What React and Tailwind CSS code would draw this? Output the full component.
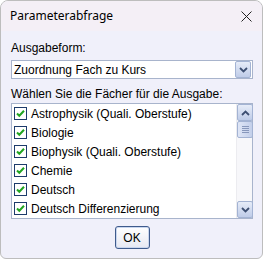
const faecher = [
  "Astrophysik (Quali. Oberstufe)",
  "Biologie",
  "Biophysik (Quali. Oberstufe)",
  "Chemie",
  "Deutsch",
  "Deutsch Differenzierung",
];

function Chevron({ up }) {
  return (
    <svg width="9" height="6" viewBox="0 0 9 6" className={up ? "rotate-180" : ""}>
      <path d="M1 1 L4.5 4.5 L8 1" fill="none" stroke="#3d4f72" strokeWidth="1.8" />
    </svg>
  );
}

function ScrollButton({ up }) {
  return (
    <div className="w-[16px] h-[17px] flex items-center justify-center border border-[#a3b3d3] rounded-[2px] bg-gradient-to-b from-[#e6ecf8] to-[#bfcce8]">
      <Chevron up={up} />
    </div>
  );
}

function CheckBox() {
  return (
    <div className="w-[13px] h-[13px] border border-[#1d3b6b] bg-white flex items-center justify-center shrink-0">
      <svg width="11" height="11" viewBox="0 0 11 11">
        <path d="M2 5.5 L4.3 7.8 L9 2.8" fill="none" stroke="#21a521" strokeWidth="2" />
      </svg>
    </div>
  );
}

export default function App() {
  return (
    <div className="w-[264px] h-[262px] bg-white font-['Liberation_Sans',sans-serif] text-[12px] text-black">
      <div className="w-[263px] h-[259px] border border-[#bdbdbd] rounded-t-lg rounded-b-md overflow-hidden flex flex-col bg-[#f0f0fa]">
        <div className="h-[30px] shrink-0 bg-[#f4eff6] flex items-center justify-between pl-[9px] pr-[10px]">
          <span className="text-[12px] font-['Noto_Sans',sans-serif] leading-none">Parameterabfrage</span>
          <svg width="11" height="11" viewBox="0 0 11 11">
            <path d="M0.5 0.5 L10.5 10.5 M10.5 0.5 L0.5 10.5" stroke="#222" strokeWidth="1" />
          </svg>
        </div>
        <div className="flex flex-col pl-[10px] pr-[9px] pt-[10px]">
          <div className="leading-[14px]">Ausgabeform:</div>
          <div className="mt-[5px] h-[19px] border border-[#a8b4cc] bg-white flex items-center justify-between pl-[2px] pr-[1px]">
            <span className="leading-none">Zuordnung Fach zu Kurs</span>
            <div className="w-[16px] h-[17px] flex items-center justify-center border border-[#a3b3d3] rounded-[2px] bg-gradient-to-b from-[#e6ecf8] to-[#bfcce8]">
              <Chevron />
            </div>
          </div>
          <div className="mt-[8px] leading-[14px]">Wählen Sie die Fächer für die Ausgabe:</div>
          <div className="mt-[2px] h-[116px] border border-[#a8b4cc] bg-white flex">
            <div className="flex-1 flex flex-col">
              {faecher.map((f) => (
                <div key={f} className="h-[19px] flex items-center gap-[4px] pl-[2px]">
                  <CheckBox />
                  <span className="leading-none">{f}</span>
                </div>
              ))}
            </div>
            <div className="w-[16px] flex flex-col bg-[#f7f7fa] border-l border-[#ececf0]">
              <ScrollButton up />
              <div className="w-[16px] h-[17px] border border-[#a3b3d3] rounded-[2px] bg-gradient-to-r from-[#dfe6f6] to-[#c3cfea] flex flex-col items-center justify-center gap-[1px]">
                <div className="w-[7px] h-px bg-[#8797bb]" />
                <div className="w-[7px] h-px bg-[#8797bb]" />
                <div className="w-[7px] h-px bg-[#8797bb]" />
                <div className="w-[7px] h-px bg-[#8797bb]" />
              </div>
              <div className="flex-1" />
              <ScrollButton />
            </div>
          </div>
          <div className="mt-[7px] flex justify-center">
            <button className="w-[35px] h-[23px] border border-[#3f5b8c] rounded-[3px] bg-gradient-to-b from-white to-[#e6e8f2] leading-none shadow-[inset_0_0_0_1px_#c9d6ee]">
              OK
            </button>
          </div>
        </div>
      </div>
    </div>
  );
}
